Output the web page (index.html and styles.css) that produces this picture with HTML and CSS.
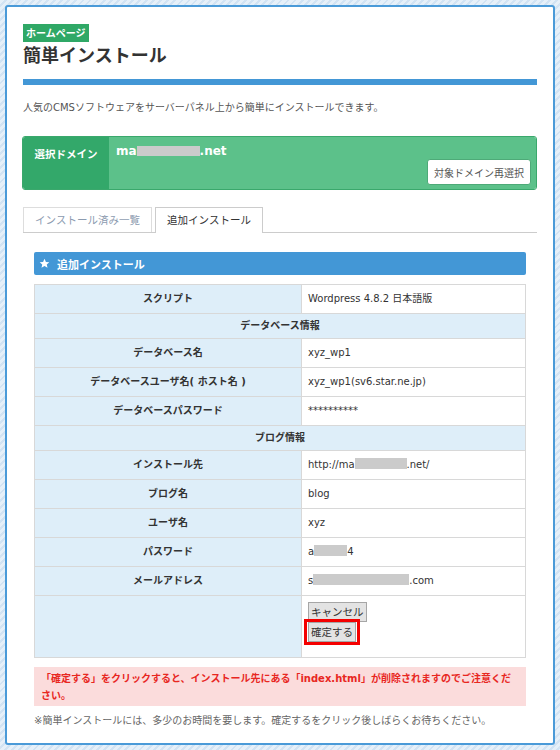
FILE: index.html
```html
<!DOCTYPE html>
<html lang="ja">
<head>
    <meta charset="UTF-8">
    <meta name="viewport" content="width=device-width, initial-scale=1.0">
    <title>簡単インストール</title>
    <link rel="stylesheet" href="styles.css">
</head>
<body>
    <div class="panel">
        <div class="badge">ホームページ</div>
        <h1 class="page-title">簡単インストール</h1>
        <div class="title-bar"></div>
        <p class="lead">人気のCMSソフトウェアをサーバーパネル上から簡単にインストールできます。</p>

        <div class="domain-box">
            <div class="domain-label">選択ドメイン</div>
            <div class="domain-body">
                <div class="domain-name">ma<span class="mask mask-domain"></span>.net</div>
                <button class="reselect">対象ドメイン再選択</button>
            </div>
        </div>

        <ul class="tabs">
            <li>インストール済み一覧</li>
            <li class="active">追加インストール</li>
        </ul>

        <div class="section">
            <h2 class="section-head">
                <svg class="star" viewBox="0 0 24 24" width="11" height="11"><path d="M12 1.5l3.1 7 7.4.6-5.6 4.9 1.7 7.4L12 17.5l-6.6 3.9 1.7-7.4L1.5 9.1l7.4-.6z" fill="#fff"/></svg>追加インストール
            </h2>
            <table class="form-table">
                <tr>
                    <th>スクリプト</th>
                    <td>Wordpress 4.8.2 日本語版</td>
                </tr>
                <tr class="group">
                    <th colspan="2">データベース情報</th>
                </tr>
                <tr>
                    <th>データベース名</th>
                    <td>xyz_wp1</td>
                </tr>
                <tr>
                    <th>データベースユーザ名( ホスト名 )</th>
                    <td>xyz_wp1(sv6.star.ne.jp)</td>
                </tr>
                <tr>
                    <th>データベースパスワード</th>
                    <td>**********</td>
                </tr>
                <tr class="group">
                    <th colspan="2">ブログ情報</th>
                </tr>
                <tr>
                    <th>インストール先</th>
                    <td>http://ma<span class="mask mask-url"></span>.net/</td>
                </tr>
                <tr>
                    <th>ブログ名</th>
                    <td>blog</td>
                </tr>
                <tr>
                    <th>ユーザ名</th>
                    <td>xyz</td>
                </tr>
                <tr>
                    <th>パスワード</th>
                    <td>a<span class="mask mask-pass"></span>4</td>
                </tr>
                <tr>
                    <th>メールアドレス</th>
                    <td>s<span class="mask mask-mail"></span>.com</td>
                </tr>
                <tr class="actions">
                    <th></th>
                    <td>
                        <div class="action-stack">
                            <button class="btn">キャンセル</button>
                            <div class="highlight"><button class="btn">確定する</button></div>
                        </div>
                    </td>
                </tr>
            </table>

            <div class="alert">「確定する」をクリックすると、インストール先にある「index.html」が削除されますのでご注意ください。</div>
            <p class="note">※簡単インストールには、多少のお時間を要します。確定するをクリック後しばらくお待ちください。</p>
        </div>
    </div>
</body>
</html>
```

FILE: styles.css
```css
body {
    margin: 0;
    padding: 5px;
    font-family: "DejaVu Sans", "Noto Sans CJK JP", sans-serif;
    font-size: 10px;
    color: #333;
    background-color: #e6f0f9;
    background-image: repeating-linear-gradient(135deg, #e6f0f9 0, #e6f0f9 3px, #d2e3f3 3px, #d2e3f3 5px);
}
.panel {
    height: 740px;
    box-sizing: border-box;
    border: 2px solid #4a9ad8;
    border-radius: 3px;
    background-color: #fff;
    padding: 17px 16px 0 16px;
}
.badge {
    width: fit-content;
    background-color: #2fa866;
    color: #fff;
    font-family: "Noto Sans CJK JP", sans-serif;
    font-size: 10px;
    font-weight: bold;
    line-height: 18px;
    padding: 0 3px;
}
.page-title {
    margin: 0;
    font-family: "Noto Sans CJK JP", sans-serif;
    font-size: 18px;
    line-height: 24px;
    font-weight: bold;
    color: #333;
}
.title-bar {
    height: 6px;
    margin-top: 13px;
    background-color: #4397d6;
}
.lead {
    margin: 15px 0 0 0;
    font-size: 10px;
    line-height: 16px;
    color: #555;
}
.domain-box {
    display: flex;
    height: 54px;
    margin: 20px 0 0 -1px;
    border-radius: 3px;
    overflow: hidden;
    border: 1px solid #3aa86c;
    box-sizing: border-box;
}
.domain-label {
    width: 86px;
    background-color: #33a86a;
    color: #fff;
    font-size: 10.5px;
    font-weight: bold;
    line-height: 16px;
    text-align: center;
    padding-top: 9px;
}
.domain-body {
    flex-grow: 1;
    background-color: #5cc18a;
    display: flex;
    flex-direction: column;
    align-items: flex-start;
    padding: 6px 5px 0 7px;
}
.domain-name {
    color: #fff;
    font-size: 12px;
    font-weight: bold;
    line-height: 16px;
    display: flex;
    align-items: center;
}
.mask {
    display: inline-block;
    height: 11px;
    background-color: #cbcbcb;
}
.mask-domain {
    width: 63px;
    height: 10px;
}
.reselect {
    align-self: flex-end;
    margin-top: 0;
    font-family: "Noto Sans CJK JP", sans-serif;
    font-size: 10px;
    color: #555;
    background-color: #fff;
    border: 1px solid #4eaa78;
    border-radius: 3px;
    width: 104px;
    height: 26px;
    padding: 0;
}
.tabs {
    list-style: none;
    margin: 17px 0 0 0;
    padding: 0;
    display: flex;
    gap: 3px;
    border-bottom: 1px solid #ccc;
    height: 25px;
}
.tabs li {
    font-family: "Noto Sans CJK JP", sans-serif;
    font-size: 10.5px;
    line-height: 24px;
    width: 127px;
    text-align: center;
    border: 1px solid #ddd;
    border-bottom: none;
    color: #8c9bb0;
    background-color: #fff;
}
.tabs li.active {
    width: 106px;
    color: #333;
    border-color: #ccc;
    height: 25px;
}
.section {
    margin: 0 11px;
}
.section-head {
    margin: 19px 0 0 0;
    height: 23px;
    display: flex;
    align-items: center;
    background-color: #4397d6;
    color: #fff;
    font-family: "Noto Sans CJK JP", sans-serif;
    font-size: 11px;
    font-weight: bold;
    padding-left: 5px;
    border-radius: 2px;
}
.star {
    margin-right: 7px;
    flex-shrink: 0;
}
.form-table {
    width: 100%;
    margin-top: 9px;
    border-collapse: collapse;
    font-size: 10px;
    line-height: 14px;
}
.form-table th,
.form-table td {
    border: 1px solid #d8d8d8;
    height: 28px;
    padding: 0;
}
.form-table th {
    width: 266px;
    background-color: #deeef9;
    font-weight: bold;
    color: #333;
    text-align: center;
}
.form-table td {
    padding-left: 6px;
    color: #333;
}
.form-table tr.group th {
    height: 24px;
}
.mask-url {
    width: 52px;
}
.mask-pass {
    width: 33px;
}
.mask-mail {
    width: 96px;
}
.form-table td .mask {
    vertical-align: -1px;
}
.form-table tr.actions th,
.form-table tr.actions td {
    height: 55px;
}
.form-table tr.actions td {
    vertical-align: top;
    padding-top: 6px;
}
.action-stack {
    display: flex;
    flex-direction: column;
    align-items: flex-start;
}
.btn {
    font-family: "Noto Sans CJK JP", sans-serif;
    font-size: 10.5px;
    color: #333;
    background-color: #e3e3e3;
    border: 1px solid #a6a6a6;
    border-radius: 0;
    padding: 0 2px;
    height: 20px;
    line-height: 18px;
}
.highlight {
    border: 3px solid #f40000;
    padding: 0 1px;
    line-height: 0;
    margin: -3px 0 0 -4px;
}
.alert {
    margin-top: 9px;
    background-color: #fbdcdc;
    color: #e8271f;
    font-size: 10px;
    font-weight: bold;
    line-height: 17px;
    padding: 3px 7px 2px 7px;
}
.note {
    margin: 7px 0 0 0;
    font-size: 10px;
    line-height: 16px;
    color: #666;
}
```
